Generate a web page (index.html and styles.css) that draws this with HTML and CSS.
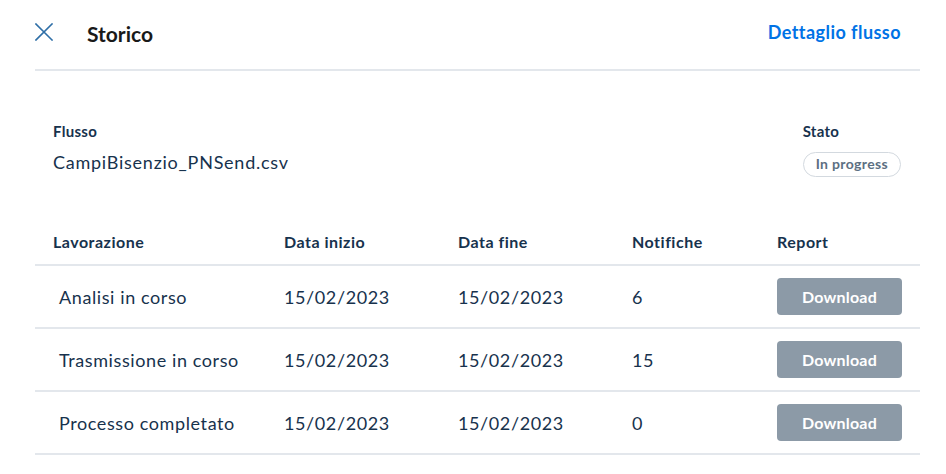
FILE: index.html
```html
<!DOCTYPE html>
<html lang="it">
<head>
<meta charset="utf-8">
<title>Storico</title>
<link rel="stylesheet" href="styles.css">
</head>
<body>
<div class="page">
  <header class="topbar">
    <div class="topbar-left">
      <svg class="close-icon" viewBox="0 0 18 18" width="18" height="18" aria-hidden="true">
        <path d="M1 1 L17 17 M17 1 L1 17" stroke="#2f6fa7" stroke-width="1.6" fill="none" stroke-linecap="square"/>
      </svg>
      <h1 class="title">Storico</h1>
    </div>
    <a class="detail-link" href="#">Dettaglio flusso</a>
  </header>

  <section class="info">
    <div class="info-col">
      <div class="label">Flusso</div>
      <div class="value">CampiBisenzio_PNSend.csv</div>
    </div>
    <div class="info-col">
      <div class="label">Stato</div>
      <span class="badge">In progress</span>
    </div>
  </section>

  <div class="table">
    <div class="row head">
      <div class="cell">Lavorazione</div>
      <div class="cell">Data inizio</div>
      <div class="cell">Data fine</div>
      <div class="cell">Notifiche</div>
      <div class="cell">Report</div>
    </div>
    <div class="row">
      <div class="cell first">Analisi in corso</div>
      <div class="cell">15/02/2023</div>
      <div class="cell">15/02/2023</div>
      <div class="cell">6</div>
      <div class="cell"><button class="btn">Download</button></div>
    </div>
    <div class="row">
      <div class="cell first">Trasmissione in corso</div>
      <div class="cell">15/02/2023</div>
      <div class="cell">15/02/2023</div>
      <div class="cell">15</div>
      <div class="cell"><button class="btn">Download</button></div>
    </div>
    <div class="row">
      <div class="cell first">Processo completato</div>
      <div class="cell">15/02/2023</div>
      <div class="cell">15/02/2023</div>
      <div class="cell">0</div>
      <div class="cell"><button class="btn">Download</button></div>
    </div>
  </div>
</div>
</body>
</html>
```

FILE: styles.css
```css
* { box-sizing: border-box; }
html, body { margin: 0; padding: 0; background: #ffffff; }
body {
  font-family: "Lato", "Noto Sans", sans-serif;
  color: #17324d;
  width: 946px;
  height: 474px;
  overflow: hidden;
}
.page {
  padding: 0 26px 0 35px;
}
.topbar {
  height: 71px;
  display: flex;
  align-items: center;
  justify-content: space-between;
  border-bottom: 2px solid #e3e7ec;
  padding: 0 19px 6px 0;
}
.topbar-left {
  display: flex;
  align-items: center;
  gap: 34px;
}
.close-icon { display: block; }
.title {
  margin: 0;
  font-size: 21px;
  font-weight: 700;
  color: #191919;
  padding-top: 4px;
}
.detail-link {
  font-size: 18px;
  font-weight: 700;
  color: #0073e6;
  text-decoration: none;
  letter-spacing: 0.45px;
}
.info {
  display: flex;
  justify-content: space-between;
  padding: 50px 19px 0 18px;
  height: 144px;
}
.info-col { display: flex; flex-direction: column; align-items: flex-start; }
.label {
  font-size: 15px;
  font-weight: 700;
  line-height: 20px;
  margin-bottom: 9px;
  letter-spacing: 0.3px;
}
.value {
  font-size: 18px;
  line-height: 24px;
  letter-spacing: 0.75px;
}
.badge {
  display: inline-block;
  border: 1.5px solid #d3d9df;
  border-radius: 13px;
  padding: 0 12px;
  height: 25px;
  line-height: 22px;
  font-size: 14px;
  font-weight: 700;
  color: #5c6f82;
  letter-spacing: 0.35px;
  margin-top: 2px;
}
.row {
  display: grid;
  grid-template-columns: 231px 174px 174px 145px 1fr;
  align-items: center;
  padding-left: 18px;
  height: 63px;
  border-bottom: 2px solid #e3e7ec;
  font-size: 18px;
  letter-spacing: 0.6px;
}
.row.head {
  height: 51px;
  font-size: 16px;
  font-weight: 700;
  padding-top: 3px;
  letter-spacing: 0.5px;
}
.cell.first { padding-left: 6px; }
.btn {
  font-family: inherit;
  font-size: 16px;
  font-weight: 700;
  color: #ffffff;
  background: #8c9aa7;
  border: none;
  border-radius: 4px;
  width: 125px;
  height: 37px;
  padding: 0;
  letter-spacing: 0.2px;
  cursor: pointer;
}
```
